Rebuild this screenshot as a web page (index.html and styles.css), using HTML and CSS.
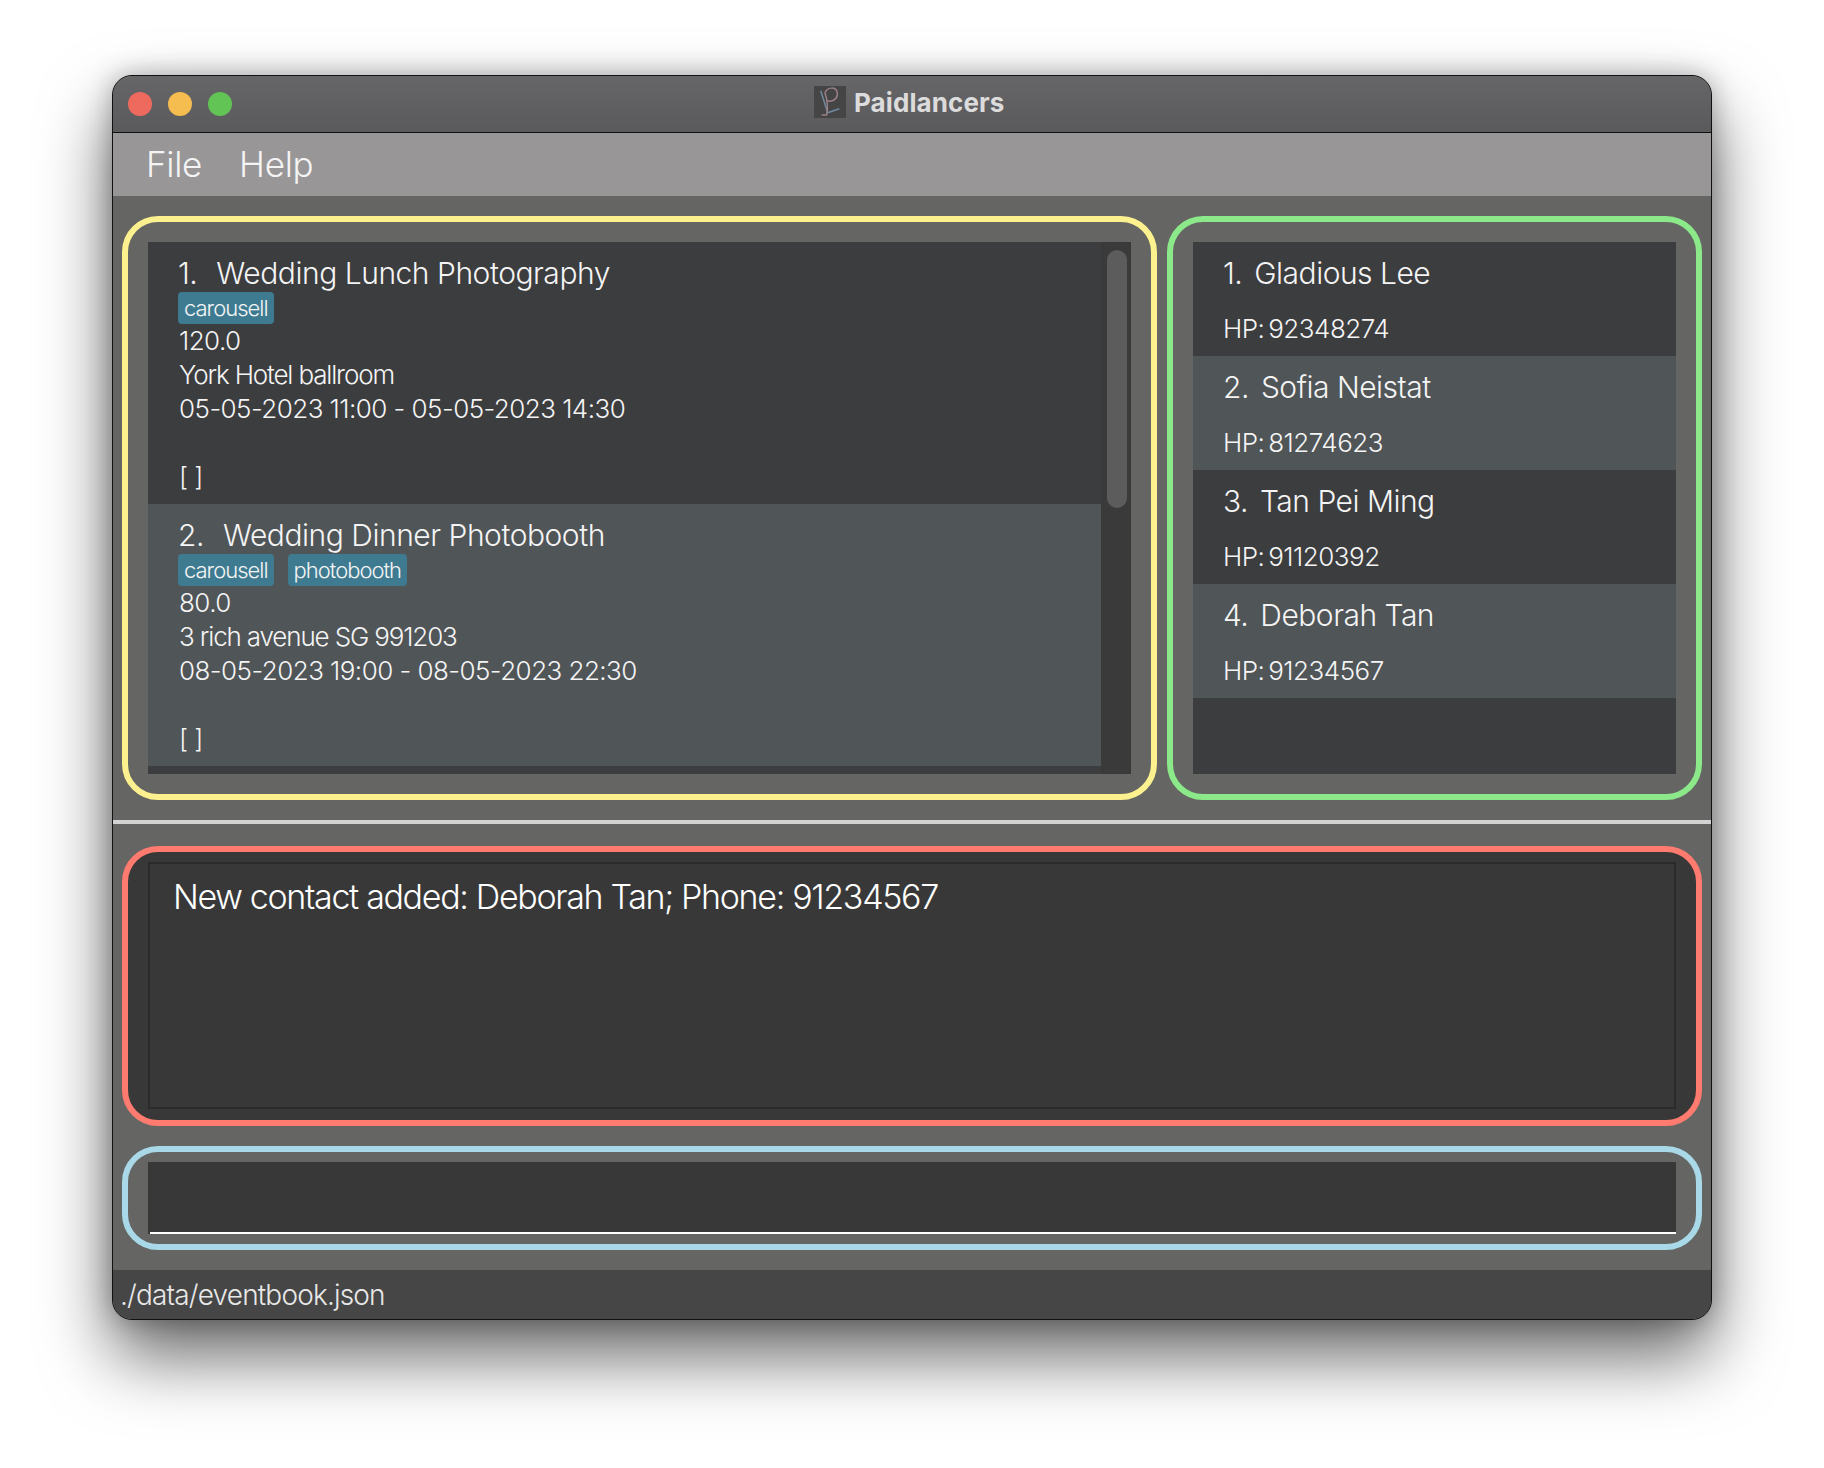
FILE: index.html
```html
<!DOCTYPE html>
<html lang="en">

<head>
    <meta charset="UTF-8">
    <title>Paidlancers</title>
    <link rel="stylesheet" href="styles.css">
</head>

<body>
    <div class="window">
        <div class="titlebar">
            <div class="lights">
                <span class="light red"></span>
                <span class="light amber"></span>
                <span class="light green"></span>
            </div>
            <div class="title">
                <svg class="app-icon" viewBox="0 0 32 32">
                    <rect width="32" height="32" fill="#454545" />
                    <path d="M6.7 4.7 L13.7 26.7 L25.3 22.7" fill="none" stroke="#7088a0" stroke-width="1.5" />
                    <path d="M7.7 29 L12.7 29 C14 22 13 13 11 7 C13 1 22 0 23.3 7 C24 14 16 17 12 14" fill="none" stroke="#9a7f85" stroke-width="1.5" />
                </svg>
                <span>Paidlancers</span>
            </div>
        </div>

        <div class="menubar">
            <span>File</span>
            <span>Help</span>
        </div>

        <div class="top">
            <div class="panel panel-events">
                <div class="list">
                    <div class="cards">
                        <div class="card">
                            <div class="card-title"><span class="num">1.</span><span>Wedding Lunch Photography</span></div>
                            <div class="tags"><span class="tag">carousell</span></div>
                            <div class="line">120.0</div>
                            <div class="line words">York Hotel ballroom</div>
                            <div class="line">05-05-2023 11:00 - 05-05-2023 14:30</div>
                            <div class="line">&nbsp;</div>
                            <div class="line">[ ]</div>
                        </div>
                        <div class="card alt">
                            <div class="card-title"><span class="num">2.</span><span>Wedding Dinner Photobooth</span></div>
                            <div class="tags"><span class="tag">carousell</span><span class="tag">photobooth</span></div>
                            <div class="line">80.0</div>
                            <div class="line words">3 rich avenue SG 991203</div>
                            <div class="line">08-05-2023 19:00 - 08-05-2023 22:30</div>
                            <div class="line">&nbsp;</div>
                            <div class="line">[ ]</div>
                        </div>
                    </div>
                    <div class="scrollbar">
                        <div class="thumb"></div>
                    </div>
                </div>
            </div>

            <div class="panel panel-people">
                <div class="people">
                    <div class="person">
                        <div class="person-name"><span class="person-num">1.</span>Gladious Lee</div>
                        <div class="person-phone">HP: 92348274</div>
                    </div>
                    <div class="person alt">
                        <div class="person-name"><span class="person-num">2.</span>Sofia Neistat</div>
                        <div class="person-phone">HP: 81274623</div>
                    </div>
                    <div class="person">
                        <div class="person-name"><span class="person-num">3.</span>Tan Pei Ming</div>
                        <div class="person-phone">HP: 91120392</div>
                    </div>
                    <div class="person alt">
                        <div class="person-name"><span class="person-num">4.</span>Deborah Tan</div>
                        <div class="person-phone">HP: 91234567</div>
                    </div>
                </div>
            </div>
        </div>

        <div class="divider"></div>

        <div class="panel panel-result">
            <div class="result">New contact added: Deborah Tan; Phone: 91234567</div>
        </div>

        <div class="panel panel-command">
            <div class="command">
                <div class="command-line"></div>
            </div>
        </div>

        <div class="statusbar">./data/eventbook.json</div>
    </div>
</body>

</html>
```

FILE: styles.css
```css
* {
    box-sizing: border-box;
}

html,
body {
    margin: 0;
    height: 1468px;
    overflow: hidden;
    background: #fff;
}

body {
    padding: 75px 112px 0;
    font-family: Inter, "Liberation Sans", sans-serif;
    font-weight: 300;
    color: #f4f4f4;
}

.window {
    width: 1600px;
    height: 1245px;
    display: flex;
    flex-direction: column;
    background: #656563;
    border: 1px solid #111;
    border-radius: 20px;
    overflow: hidden;
    box-shadow: 0 36px 70px rgba(0, 0, 0, .6), 0 0 26px rgba(0, 0, 0, .28);
}

.titlebar {
    height: 57px;
    flex: none;
    display: flex;
    align-items: center;
    padding-left: 15px;
    background: linear-gradient(#666668, #5a5a5c);
    border-bottom: 1px solid #111;
    position: relative;
}

.lights {
    display: flex;
    gap: 16px;
}

.light {
    width: 24px;
    height: 24px;
    border-radius: 50%;
}

.red {
    background: #ee6a5f;
}

.amber {
    background: #f5bd4f;
}

.green {
    background: #61c454;
}

.title {
    position: absolute;
    left: 701px;
    top: 10px;
    display: flex;
    align-items: center;
    gap: 8px;
    font-size: 26px;
    font-weight: 700;
    letter-spacing: .1px;
    color: #dcdcdc;
}

.app-icon {
    width: 32px;
    height: 32px;
}

.menubar {
    height: 63px;
    flex: none;
    display: flex;
    align-items: center;
    gap: 37px;
    padding: 0 0 2px 33px;
    background: #989697;
    font-size: 35px;
    letter-spacing: -.3px;
}

.top {
    display: flex;
    gap: 10px;
    padding: 20px 9px 0;
    flex: none;
}

.panel {
    border: 6px solid;
    border-radius: 36px;
}

.panel-events {
    width: 1035px;
    height: 584px;
    padding: 20px;
    border-color: #fdf08f;
}

.panel-people {
    width: 535px;
    height: 584px;
    padding: 20px;
    border-color: #8ce98a;
}

.list {
    height: 532px;
    display: flex;
    overflow: hidden;
    background: #3c3d3f;
}

.cards {
    width: 953px;
    flex: none;
}

.card {
    height: 262px;
    padding: 13px 0 0 30px;
    background: #3c3d3f;
}

.alt {
    background: #505558;
}

.card-title {
    display: flex;
    gap: 19px;
    height: 36px;
    line-height: 36px;
    font-size: 30px;
    letter-spacing: -.47px;
}

.tags {
    display: flex;
    gap: 14px;
    margin-top: 1px;
}

.tag {
    height: 32px;
    padding: 0 6px;
    line-height: 32px;
    font-size: 22px;
    letter-spacing: -1px;
    background: #3e7b91;
    border-radius: 4px;
}

.line {
    height: 34px;
    padding-left: 1px;
    line-height: 34px;
    font-size: 26px;
    letter-spacing: -.55px;
}

.line.words {
    letter-spacing: -1.15px;
}

.scrollbar {
    flex: 1;
    padding: 8px 4px 0 6px;
    background: #3a3a3a;
}

.thumb {
    height: 258px;
    background: #5c5c5c;
    border-radius: 10px;
}

.people {
    height: 532px;
    background: #3c3d3f;
}

.person {
    height: 114px;
    padding: 13px 0 0 30px;
}

.person-name {
    height: 36px;
    line-height: 36px;
    font-size: 30px;
    letter-spacing: -.5px;
}

.person-num {
    margin-right: 12px;
}

.person-phone {
    margin-top: 21px;
    height: 34px;
    line-height: 34px;
    font-size: 26px;
    letter-spacing: -.5px;
    word-spacing: -3px;
}

.divider {
    height: 4px;
    margin-top: 20px;
    flex: none;
    background: #d3d3d3;
}

.panel-result {
    margin: 22px 9px 0;
    height: 280px;
    flex: none;
    padding: 10px 20px 11px;
    border-color: #ff7b70;
    background: #383838;
}

.result {
    height: 247px;
    padding: 13px 23px;
    border: 2px solid #2b2b2b;
    font-size: 34px;
    line-height: 40px;
    letter-spacing: -1.33px;
    color: #fff;
}

.panel-command {
    margin: 20px 9px 0;
    height: 104px;
    flex: none;
    padding: 10px 20px;
    border-color: #a9d9e8;
}

.command {
    height: 72px;
    padding: 70px 0 0 2px;
    background: #383838;
}

.command-line {
    height: 2px;
    background: #fff;
}

.statusbar {
    margin-top: 20px;
    flex: 1;
    padding: 8px 0 0 7px;
    background: #464646;
    font-size: 28px;
    line-height: 34px;
    letter-spacing: -.83px;
    color: #e8e8e8;
}
```
